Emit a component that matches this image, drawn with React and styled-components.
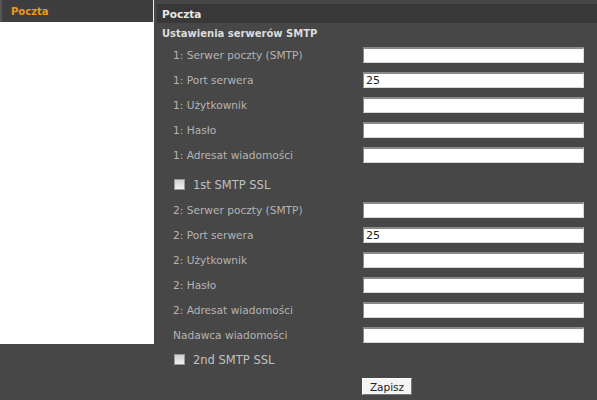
import React from "react";
import styled, { createGlobalStyle } from "styled-components";

const Global = createGlobalStyle`
  html, body { margin: 0; padding: 0; background: #474747; }
  body { font-family: "DejaVu Sans", Verdana, sans-serif; }
`;

const Page = styled.div`
  display: flex;
  align-items: flex-start;
  width: 597px;
  height: 400px;
  background: #474747;
  overflow: hidden;
`;

const Sidebar = styled.div`
  width: 154px;
  display: flex;
  flex-direction: column;
  flex-shrink: 0;
`;

const SideHeader = styled.div`
  height: 22px;
  background: #3e3e3e;
  border-left: 2px solid #555;
  border-right: 1px solid #f0f0f0;
  display: flex;
  align-items: center;
  padding-left: 9px;
  box-sizing: border-box;
`;

const SideItem = styled.span`
  color: #e89a1c;
  font-weight: bold;
  font-size: 10px;
`;

const SideBody = styled.div`
  height: 322px;
  background: #ffffff;
`;

const Main = styled.div`
  flex: 1;
  margin-left: 3px;
  padding-top: 4px;
  display: flex;
  flex-direction: column;
`;

const MainHeader = styled.div`
  height: 19px;
  background: #383838;
  color: #e8e8e8;
  font-weight: bold;
  font-size: 10.5px;
  display: flex;
  align-items: center;
  padding-left: 5px;
`;

const Title = styled.div`
  height: 19px;
  color: #dcdcdc;
  font-weight: bold;
  font-size: 10px;
  display: flex;
  align-items: center;
  padding-left: 5px;
  padding-top: 1px;
  box-sizing: border-box;
`;

const Row = styled.div`
  height: 25px;
  display: flex;
  align-items: center;
  padding-left: 16px;
`;

const Label = styled.span`
  width: 190px;
  color: #b4b4b4;
  font-size: 10.6px;
  padding-top: 1px;
`;

const Input = styled.input`
  box-sizing: border-box;
  width: 221px;
  height: 16px;
  margin: 0;
  padding: 0 2px;
  border: 1px solid;
  border-color: #8a8a8a #d8d8d8 #d8d8d8 #8a8a8a;
  border-top-width: 2px;
  background: #fff;
  font-family: "DejaVu Sans", Verdana, sans-serif;
  font-size: 11px;
  color: #222;
  outline: none;
`;

const CheckRow = styled.label`
  height: ${(p) => p.$h}px;
  display: flex;
  align-items: flex-start;
  padding-left: 17px;
  padding-top: ${(p) => p.$top}px;
  box-sizing: border-box;
  gap: 8px;
  color: #c0c0c0;
  font-size: 11.5px;
`;

const Box = styled.span`
  width: 11px;
  height: 11px;
  box-sizing: border-box;
  border: 1px solid #9a9a9a;
  background: linear-gradient(#d0d0d0, #f0f0f0);
  margin-top: 1px;
`;

const Actions = styled.div`
  display: flex;
  padding-left: 205px;
`;

const Button = styled.button`
  width: 50px;
  height: 17px;
  padding: 0;
  background: #f4f4f4;
  border: 1px solid;
  border-color: #fff #777 #777 #fff;
  font-family: "DejaVu Sans", Verdana, sans-serif;
  font-size: 10.5px;
  color: #222;
`;

const Field = ({ label, value }) => (
  <Row>
    <Label>{label}</Label>
    <Input defaultValue={value || ""} />
  </Row>
);

export default function App() {
  return (
    <Page>
      <Global />
      <Sidebar>
        <SideHeader>
          <SideItem>Poczta</SideItem>
        </SideHeader>
        <SideBody />
      </Sidebar>
      <Main>
        <MainHeader>Poczta</MainHeader>
        <Title>Ustawienia serwerów SMTP</Title>
        <Field label="1: Serwer poczty (SMTP)" />
        <Field label="1: Port serwera" value="25" />
        <Field label="1: Użytkownik" />
        <Field label="1: Hasło" />
        <Field label="1: Adresat wiadomości" />
        <CheckRow $h={30} $top={11}>
          <Box />
          1st SMTP SSL
        </CheckRow>
        <Field label="2: Serwer poczty (SMTP)" />
        <Field label="2: Port serwera" value="25" />
        <Field label="2: Użytkownik" />
        <Field label="2: Hasło" />
        <Field label="2: Adresat wiadomości" />
        <Field label="Nadawca wiadomości" />
        <CheckRow $h={31} $top={6}>
          <Box />
          2nd SMTP SSL
        </CheckRow>
        <Actions>
          <Button>Zapisz</Button>
        </Actions>
      </Main>
    </Page>
  );
}
